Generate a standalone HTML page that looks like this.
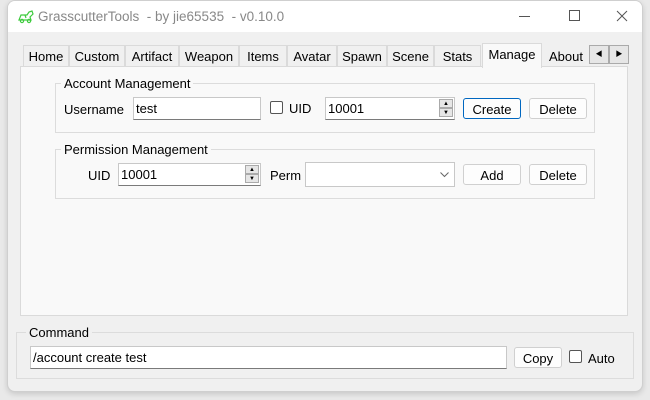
<!DOCTYPE html>
<html><head><meta charset="utf-8"><style>
*{box-sizing:border-box;margin:0;padding:0}
body{width:650px;height:400px;background:#e9e9e9;font-family:"Liberation Sans","Noto Sans CJK SC",sans-serif;font-size:13px;color:#000;position:relative;overflow:hidden}
.a{position:absolute}
.win{left:7px;top:0;width:636px;height:392px;background:#f0f0f0;border:1px solid #cfcfcf;border-radius:8px;overflow:hidden;box-shadow:0 2px 6px rgba(0,0,0,.15)}
.tb{left:0;top:0;width:636px;height:31px;background:#fff}
.tab{top:45px;height:21px;background:#f0f0f0;border:1px solid #dadada;border-bottom:none;text-align:center;line-height:22px}
.grp{border:1px solid #dcdcdc}
.gt{background:#f9f9f9;padding:0 3px;line-height:14px}
.inp{background:#fff;border:1px solid #c8c8c8;border-bottom:1px solid #7a7a7a;padding-left:2px;line-height:21px}
.btn{background:#fdfdfd;border:1px solid #d0d0d0;border-radius:3px;text-align:center;line-height:21px}
.cb{width:13px;height:13px;border:1px solid #555;border-radius:2px;background:#fff}
.spin{width:14px;border:1px solid #aaa;background:#e6e6e6;font-size:6px;text-align:center;line-height:8px}
</style></head><body>
<div class="a win">
<div class="a tb"></div>
<svg class="a" style="left:9px;top:8px" width="20" height="16" viewBox="0 0 20 16"><g fill="none" stroke="#3ecb3e" stroke-width="1.2"><path d="M2 11 L4 6 L10 6 L12 3 L15 2 L16 5 L13 8 L14 11 Z"/><circle cx="5" cy="12" r="1.6"/><circle cx="12" cy="12" r="1.6"/><path d="M8 6 L9 9"/></g></svg>
<div class="a" style="left:30px;top:8px;color:#888;font-size:13.5px">GrasscutterTools &nbsp;- by jie65535 &nbsp;- v0.10.0</div>
<div class="a" style="left:511px;top:15px;width:11px;height:1px;background:#555"></div>
<div class="a" style="left:561px;top:9px;width:11px;height:11px;border:1px solid #555"></div>
<svg class="a" style="left:608px;top:9px" width="12" height="12"><path d="M1 1L11 11M11 1L1 11" stroke="#555" stroke-width="1"/></svg>
</div>
<div class="a" style="left:20px;top:66px;width:608px;height:250px;background:#f9f9f9;border:1px solid #dadada"></div>
<div class="a tab" style="left:23px;width:46px">Home</div>
<div class="a tab" style="left:69px;width:56px">Custom</div>
<div class="a tab" style="left:125px;width:54px">Artifact</div>
<div class="a tab" style="left:179px;width:60px">Weapon</div>
<div class="a tab" style="left:239px;width:48px">Items</div>
<div class="a tab" style="left:287px;width:50px">Avatar</div>
<div class="a tab" style="left:337px;width:50px">Spawn</div>
<div class="a tab" style="left:387px;width:47px">Scene</div>
<div class="a tab" style="left:434px;width:47px">Stats</div>
<div class="a tab" style="left:482px;width:60px;top:43px;height:25px;background:#f9f9f9;line-height:22px">Manage</div>
<div class="a tab" style="left:542px;width:48px;border:none;background:transparent;line-height:24px">About</div>
<div class="a" style="left:589px;top:45px;width:20px;height:19px;border:1px solid #aaa;background:#e6e6e6;font-size:7px;text-align:center;line-height:17px">◀</div>
<div class="a" style="left:609px;top:45px;width:20px;height:19px;border:1px solid #aaa;background:#e6e6e6;font-size:7px;text-align:center;line-height:17px">▶</div>

<div class="a grp" style="left:55px;top:83px;width:540px;height:50px"></div>
<div class="a gt" style="left:61px;top:77px">Account Management</div>
<div class="a" style="left:64px;top:102px">Username</div>
<div class="a inp" style="left:133px;top:97px;width:128px;height:23px">test</div>
<div class="a cb" style="left:270px;top:101px"></div>
<div class="a" style="left:289px;top:101px">UID</div>
<div class="a inp" style="left:325px;top:97px;width:130px;height:23px">10001</div>
<div class="a spin" style="left:439px;top:99px;height:9px">▲</div>
<div class="a spin" style="left:439px;top:108px;height:9px">▼</div>
<div class="a btn" style="left:463px;top:98px;width:58px;height:21px;border-color:#0067c0">Create</div>
<div class="a btn" style="left:529px;top:98px;width:58px;height:21px">Delete</div>

<div class="a grp" style="left:55px;top:149px;width:540px;height:50px"></div>
<div class="a gt" style="left:61px;top:143px">Permission Management</div>
<div class="a" style="left:88px;top:168px">UID</div>
<div class="a inp" style="left:118px;top:163px;width:143px;height:23px">10001</div>
<div class="a spin" style="left:245px;top:165px;height:9px">▲</div>
<div class="a spin" style="left:245px;top:174px;height:9px">▼</div>
<div class="a" style="left:270px;top:168px">Perm</div>
<div class="a inp" style="left:305px;top:162px;width:150px;height:25px;border-bottom-color:#c8c8c8"></div>
<svg class="a" style="left:440px;top:172px" width="9" height="6"><path d="M0.5 0.5L4.5 4.5L8.5 0.5" stroke="#666" fill="none"/></svg>
<div class="a btn" style="left:463px;top:164px;width:58px;height:21px">Add</div>
<div class="a btn" style="left:529px;top:164px;width:58px;height:21px">Delete</div>

<div class="a grp" style="left:16px;top:332px;width:618px;height:47px"></div>
<div class="a gt" style="left:26px;top:326px;background:#f0f0f0">Command</div>
<div class="a inp" style="left:30px;top:346px;width:477px;height:23px">/account create test</div>
<div class="a btn" style="left:514px;top:347px;width:48px;height:21px">Copy</div>
<div class="a cb" style="left:569px;top:350px"></div>
<div class="a" style="left:588px;top:351px">Auto</div>
</body></html>
